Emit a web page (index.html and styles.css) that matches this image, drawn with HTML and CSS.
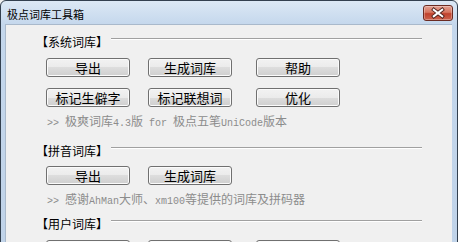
FILE: index.html
```html
<!DOCTYPE html>
<html lang="zh-CN">
<head>
    <meta charset="UTF-8">
    <title>极点词库工具箱</title>
    <link rel="stylesheet" href="styles.css">
</head>
<body>
    <div id="window">
        <div class="titlebar">
            <span class="title">极点词库工具箱</span>
            <button class="close" title="关闭">
                <svg width="30" height="16" viewBox="0 0 30 16">
                    <path d="M10.5 4.5 L19.5 11.5 M19.5 4.5 L10.5 11.5" stroke="#4a1f1a" stroke-width="4" stroke-linecap="square"/>
                    <path d="M10.5 4.5 L19.5 11.5 M19.5 4.5 L10.5 11.5" stroke="#ffffff" stroke-width="2.2" stroke-linecap="square"/>
                </svg>
            </button>
        </div>

        <div class="client">
            <div class="group">
                <div class="group-head"><span>【系统词库】</span><div class="rule"></div></div>
                <div class="row">
                    <button class="btn">导出</button>
                    <button class="btn">生成词库</button>
                    <button class="btn">帮助</button>
                </div>
                <div class="row">
                    <button class="btn">标记生僻字</button>
                    <button class="btn">标记联想词</button>
                    <button class="btn">优化</button>
                </div>
                <p class="note"><span class="lat">&gt;&gt; </span>极爽词库<span class="lat">4.3</span>版<span class="lat"> for </span>极点五笔<span class="lat">UniCode</span>版本</p>
            </div>

            <div class="group">
                <div class="group-head"><span>【拼音词库】</span><div class="rule"></div></div>
                <div class="row tight">
                    <button class="btn">导出</button>
                    <button class="btn">生成词库</button>
                </div>
                <p class="note"><span class="lat">&gt;&gt; </span>感谢<span class="lat">AhMan</span>大师、<span class="lat">xm100</span>等提供的词库及拼码器</p>
            </div>

            <div class="group">
                <div class="group-head"><span>【用户词库】</span><div class="rule"></div></div>
                <div class="row">
                    <button class="btn">导出</button>
                    <button class="btn">批量删词</button>
                    <button class="btn">批量加词</button>
                </div>
            </div>
        </div>
    </div>
</body>
</html>
```

FILE: styles.css
```css
* {
    margin: 0;
    padding: 0;
    box-sizing: border-box;
}

body {
    font-family: "Noto Sans CJK SC", sans-serif;
    background: #f0f0f0;
    width: 458px;
    height: 242px;
    overflow: hidden;
}

#window {
    width: 458px;
    height: 300px;
    border: 1px solid #33404f;
    border-radius: 6px 6px 0 0;
    background: linear-gradient(#dce8f5 0px, #c4d7ec 24px, #bfd2e8 100%);
    padding: 0 5px 0 4px;
    display: flex;
    flex-direction: column;
}

.titlebar {
    height: 23px;
    display: flex;
    align-items: center;
    justify-content: space-between;
    padding-left: 2px;
}

.title {
    font-size: 11px;
    line-height: 14px;
    padding-top: 2px;
    color: #000;
}

.close {
    width: 30px;
    height: 16px;
    border: 1px solid #6b2b22;
    border-radius: 3px;
    background: linear-gradient(#e3a193 0%, #d6755f 45%, #c0412c 55%, #cc634e 100%);
    box-shadow: inset 0 0 0 1px rgba(255, 255, 255, 0.3);
    display: flex;
    align-items: center;
    justify-content: center;
    margin-right: -1px;
}

.close svg {
    display: block;
}

.client {
    flex: 1;
    background: #f0f0f0;
    border-left: 1px solid #a9b9cb;
    border-top: 1px solid #a9b9cb;
    padding: 9px 30px 0 30px;
}

.group-head {
    display: flex;
    align-items: flex-start;
    height: 16px;
    font-size: 12px;
    line-height: 16px;
    color: #000;
}

.rule {
    flex: 1;
    margin: 4px 0 0 3px;
    border-top: 1px solid #a0a0a0;
    border-bottom: 1px solid #ffffff;
}

.row {
    display: grid;
    grid-template-columns: 102px 108px 84px;
    margin: 8px 0 0 10px;
}

.row + .row {
    margin-top: 11px;
}

.row.tight {
    margin-top: 7px;
}

.btn {
    width: 84px;
    height: 19px;
    border: 1px solid #707070;
    border-radius: 3px;
    background: linear-gradient(#f2f2f2 0%, #ebebeb 50%, #dddddd 50%, #cfcfcf 100%);
    box-shadow: inset 0 0 0 1px #fbfbfb;
    font-family: "Noto Sans CJK SC", sans-serif;
    font-size: 13px;
    line-height: 17px;
    color: #000;
}

.note {
    margin: 6px 0 0 11px;
    font-size: 12px;
    line-height: 16px;
    color: #8c8c8c;
    white-space: nowrap;
}

.lat {
    font-family: "Liberation Mono", monospace;
    font-size: 10px;
}

.group + .group {
    margin-top: 11px;
}

.group:last-child {
    margin-top: 6px;
}
```
